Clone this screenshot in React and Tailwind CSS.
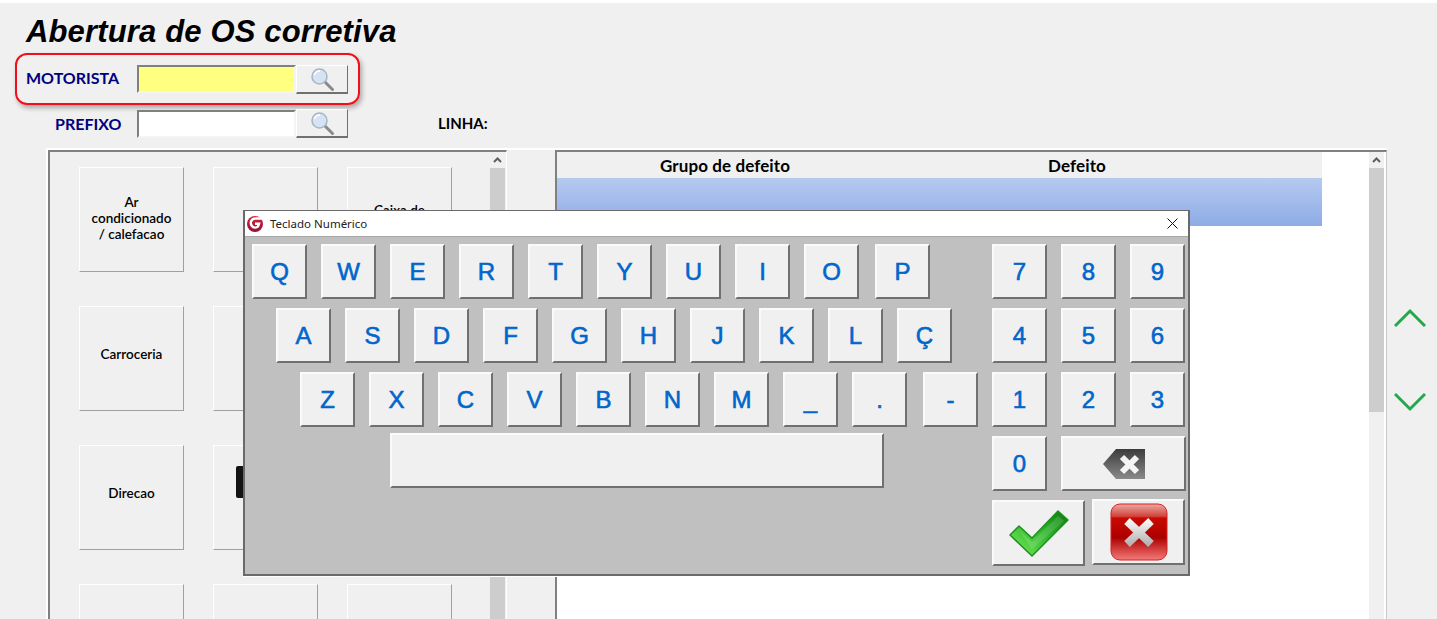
import React from 'react';

const ROW_1 = ['Q', 'W', 'E', 'R', 'T', 'Y', 'U', 'I', 'O'];
const ROW_2 = ['A', 'S', 'D', 'F', 'G', 'H', 'J', 'K', 'L', 'Ç'];
const ROW_3 = ['Z', 'X', 'C', 'V', 'B', 'N', 'M', '_', '.'];
const DIGITS = ['7', '8', '9', '4', '5', '6', '1', '2', '3'];

const TILES = [
  ['Ar', 'condicionado', '/ calefacao'],
  ['Eletrica'],
  ['Caixa de', 'cambio', ''],
  ['Carroceria'],
  [''],
  [''],
  ['Direcao'],
  ['icon'],
  [''],
  [''],
  ['Geometria e', 'suspensao', ''],
  [''],
];

const keyClass =
  'flex items-center justify-center bg-[#f0f0f0] border-2 border-t-[#fafafa] border-l-[#fafafa] border-r-[#707070] border-b-[#707070] text-[#0066cc] text-[24px] leading-none [-webkit-text-stroke:0.6px_#0066cc]';

function Key({ children, className = 'w-[55px] h-[55px]' }) {
  return <div className={`${keyClass} ${className}`}>{children}</div>;
}

function SearchIcon() {
  return (
    <svg width="26" height="26" viewBox="0 0 26 26" fill="none">
      <path d="M15 15 L23.5 23.5" stroke="#8a8a8a" strokeWidth="3" strokeLinecap="round" />
      <circle cx="10.5" cy="10.5" r="7.5" fill="#d5e3f2" stroke="#a8b6c4" strokeWidth="1.5" />
      <path d="M5.5 9 A5.5 5.5 0 0 1 11 5" stroke="#ffffff" strokeWidth="1.5" />
    </svg>
  );
}

function SearchButton() {
  return (
    <div className="flex h-[29px] w-[52px] items-center justify-center bg-[#f0f0f0] border border-t-white border-l-white border-r-[#707070] border-b-[#707070] border-b-2">
      <SearchIcon />
    </div>
  );
}

function LookupInput({ color }) {
  return (
    <div className={`h-[28px] w-[159px] border-2 border-t-[#808080] border-l-[#808080] border-r-[#f4f4f4] border-b-[#f4f4f4] ${color}`} />
  );
}

function ScrollArrow() {
  return (
    <div className="flex h-[16px] w-full items-center justify-center bg-[#f0f0f0]">
      <svg width="9" height="6" viewBox="0 0 9 6" fill="none">
        <path d="M1 5 L4.5 1.5 L8 5" stroke="#606060" strokeWidth="2" />
      </svg>
    </div>
  );
}

function Tile({ lines }) {
  const pad = lines.length === 1 ? 'pb-[10px]' : 'pb-[4px]';
  return (
    <div className={`flex h-[105px] w-[105px] flex-col items-center justify-center border border-t-white border-l-white border-r-[#a0a0a0] border-b-[#a0a0a0] text-center font-semibold text-[13.5px] leading-[16px] text-black ${pad}`}>
      {lines[0] === 'icon' ? (
        <div className="mb-[22px] h-[32px] w-[59px] rounded-[2px] bg-gradient-to-r from-[#111] to-[#3a3a3a]" />
      ) : (
        lines.map((line, i) => <div key={i}>{line}</div>)
      )}
    </div>
  );
}

function Logo() {
  return (
    <svg width="17" height="17" viewBox="0 0 17 17" fill="none">
      <defs>
        <linearGradient id="logoRed" x1="0" y1="0" x2="0" y2="1">
          <stop offset="0" stopColor="#d9203a" />
          <stop offset="1" stopColor="#8c1538" />
        </linearGradient>
      </defs>
      <circle cx="8" cy="9" r="8" fill="url(#logoRed)" />
      <path d="M15.5 3.5 H8.5 A4.5 4.5 0 0 0 5 11 A4 4 0 0 0 11 11.5 L12 8.8 H8" stroke="#ffffff" strokeWidth="2.4" />
    </svg>
  );
}

function BackspaceIcon() {
  return (
    <svg width="44" height="32" viewBox="0 0 44 32" fill="none">
      <defs>
        <linearGradient id="bsGrey" x1="0" y1="0" x2="0" y2="1">
          <stop offset="0" stopColor="#3c3c3c" />
          <stop offset="1" stopColor="#8a8a8a" />
        </linearGradient>
      </defs>
      <path d="M1 16 L14 1 H43 V31 H14 Z" fill="url(#bsGrey)" />
      <path d="M20 9 L35 24 M35 9 L20 24" stroke="#f4f4f4" strokeWidth="6" />
    </svg>
  );
}

function CheckIcon() {
  return (
    <svg width="62" height="50" viewBox="0 0 62 50" fill="none">
      <defs>
        <linearGradient id="okGreen" x1="0" y1="1" x2="1" y2="0">
          <stop offset="0" stopColor="#7bee5e" />
          <stop offset="0.55" stopColor="#2fb52c" />
          <stop offset="1" stopColor="#0a7a0a" />
        </linearGradient>
      </defs>
      <path
        d="M2 27 L11 18 L24 30 L50 3 L60 12 L24 48 Z"
        fill="url(#okGreen)"
        stroke="#1f8f1f"
        strokeWidth="1.5"
        strokeLinejoin="round"
      />
      <path d="M11 22 L24 34 L50 8 L56 13 L24 41 Z" fill="#ffffff" fillOpacity="0.14" />
    </svg>
  );
}

function CancelIcon() {
  return (
    <svg width="58" height="58" viewBox="0 0 58 58" fill="none">
      <defs>
        <linearGradient id="noRed" x1="0" y1="0" x2="0" y2="1">
          <stop offset="0" stopColor="#eda8a4" />
          <stop offset="0.22" stopColor="#d0443c" />
          <stop offset="0.25" stopColor="#c80a00" />
          <stop offset="0.6" stopColor="#ac0000" />
          <stop offset="1" stopColor="#f47a78" />
        </linearGradient>
        <linearGradient id="noGrey" x1="0" y1="0" x2="0" y2="1">
          <stop offset="0" stopColor="#f6f6f6" />
          <stop offset="1" stopColor="#b4b4b4" />
        </linearGradient>
      </defs>
      <rect x="1" y="1" width="56" height="56" rx="9" fill="url(#noRed)" stroke="#d62020" strokeWidth="1" />
      <path d="M17 18 L41 41 M41 18 L17 41" stroke="url(#noGrey)" strokeWidth="8" />
    </svg>
  );
}

function KeyboardDialog() {
  return (
    <div className="absolute left-[243px] top-[207px] flex h-[366px] w-[947px] flex-col border-2 border-t border-[#6a6a6a] bg-[#c0c0c0] shadow-[0_1px_0_#fff]">
      <div className="flex h-[25px] items-center justify-between bg-white pl-[2px] pr-[10px] font-['Noto_Sans',sans-serif] text-[11.5px] text-[#222]">
        <div className="flex items-center gap-[6px]">
          <Logo />
          <span>Teclado Numérico</span>
        </div>
        <svg width="11" height="11" viewBox="0 0 11 11" fill="none">
          <path d="M0.5 0.5 L10.5 10.5 M10.5 0.5 L0.5 10.5" stroke="#111" strokeWidth="1" />
        </svg>
      </div>
      <div className="flex flex-1 border-t border-[#a8a8a8] pt-[7px] font-['Liberation_Sans',sans-serif]">
        <div className="flex w-[747px] flex-col">
          <div className="flex flex-col gap-[9px]">
            <div className="flex gap-[14px] pl-[7px]">
              {ROW_1.map((k) => (
                <Key key={k}>{k}</Key>
              ))}
              <Key className="ml-[2px] w-[55px] h-[55px]">P</Key>
            </div>
            <div className="flex gap-[14px] pl-[31px]">
              {ROW_2.map((k) => (
                <Key key={k}>{k}</Key>
              ))}
            </div>
            <div className="flex gap-[14px] pl-[55px]">
              {ROW_3.map((k) => (
                <Key key={k}>{k}</Key>
              ))}
              <Key className="ml-[2px] w-[55px] h-[55px]">-</Key>
            </div>
          </div>
          <Key className="ml-[145px] mt-[6px] h-[55px] w-[494px]" />
        </div>
        <div className="flex w-[195px] flex-col">
          <div className="grid grid-cols-[55px_55px_55px] gap-x-[14px] gap-y-[9px]">
            {DIGITS.map((k) => (
              <Key key={k}>{k}</Key>
            ))}
          </div>
          <div className="mt-[9px] flex gap-[14px]">
            <Key>0</Key>
            <Key className="h-[55px] w-[125px]">
              <BackspaceIcon />
            </Key>
          </div>
          <div className="mt-[9px] flex items-start gap-[7px]">
            <Key className="h-[66px] w-[93px]">
              <CheckIcon />
            </Key>
            <Key className="-mt-[1px] h-[66px] w-[93px]">
              <CancelIcon />
            </Key>
          </div>
        </div>
      </div>
    </div>
  );
}

export default function App() {
  return (
    <div className="relative h-[619px] w-[1437px] overflow-hidden border-t-[3px] border-white bg-[#f0f0f0] font-['Lato',sans-serif]">
      <div className="flex h-[50px] items-center pl-[26px] pt-[7px] font-['Liberation_Sans',sans-serif] text-[31px] font-bold italic leading-none tracking-[0.15px] text-black">
        Abertura de OS corretiva
      </div>

      {/* highlighted driver lookup */}
      <div className="ml-[15px] flex h-[52px] w-[345px] items-center rounded-[12px] border-2 border-[#f0101a] pl-[9px] shadow-[2px_3px_5px_rgba(0,0,0,0.3)]">
        <div className="w-[111px] pb-[2px] text-[16px] font-bold leading-none text-[#000080]">MOTORISTA</div>
        <LookupInput color="bg-[#ffff80]" />
        <SearchButton />
      </div>

      <div className="mt-[4px] flex h-[29px] items-center pl-[55px]">
        <div className="w-[82px] text-[16px] font-bold leading-none text-[#000080]">PREFIXO</div>
        <LookupInput color="bg-white" />
        <SearchButton />
        <div className="ml-[90px] text-[15px] font-bold leading-none text-black">LINHA:</div>
      </div>

      <div className="mt-[10px] flex h-[480px] pl-[46px]">
        <div className="flex w-[1341px] border-t-2 border-white pl-[2px]">
          <div className="flex h-[480px] w-[459px] border-l-2 border-t-2 border-r border-[#808080] border-r-white shadow-[-2px_0_0_#fff]">
            <div className="grid flex-1 grid-cols-[105px_105px_105px] content-start gap-x-[29px] gap-y-[34px] pl-[29px] pt-[15px]">
              {TILES.map((lines, i) => (
                <Tile key={i} lines={lines} />
              ))}
            </div>
            <div className="flex w-[15px] flex-col">
              <ScrollArrow />
              <div className="flex-1 bg-[#cdcdcd]" />
            </div>
            <div className="w-[1px]" />
          </div>

          <div className="ml-[48px] flex h-[480px] w-[832px] border-l-2 border-t-2 border-r border-[#808080] border-r-[#c8c8c8] bg-white">
            <div className="w-[765px]">
              <div className="flex h-[26px] items-center bg-[#f0f0f0] text-[17px] font-bold leading-none tracking-[0.1px] text-black">
                <div className="w-[336px] text-center">Grupo de defeito</div>
                <div className="w-[368px] text-center">Defeito</div>
              </div>
              <div className="h-[48px] bg-gradient-to-b from-[#b5caf0] to-[#8eabe6]" />
            </div>
            <div className="ml-[47px] flex w-[15px] flex-col bg-[#f0f0f0]">
              <ScrollArrow />
              <div className="h-[244px] bg-[#cdcdcd]" />
            </div>
          </div>
        </div>

        <div className="ml-[7px] flex w-[32px] flex-col items-center pt-[160px]">
          <svg width="32" height="20" viewBox="0 0 32 20" fill="none">
            <path d="M1 18 L16 3 L31 18" stroke="#22a84a" strokeWidth="3" />
          </svg>
          <svg className="mt-[64px]" width="32" height="20" viewBox="0 0 32 20" fill="none">
            <path d="M1 2 L16 17 L31 2" stroke="#22a84a" strokeWidth="3" />
          </svg>
        </div>
      </div>

      <KeyboardDialog />
    </div>
  );
}
